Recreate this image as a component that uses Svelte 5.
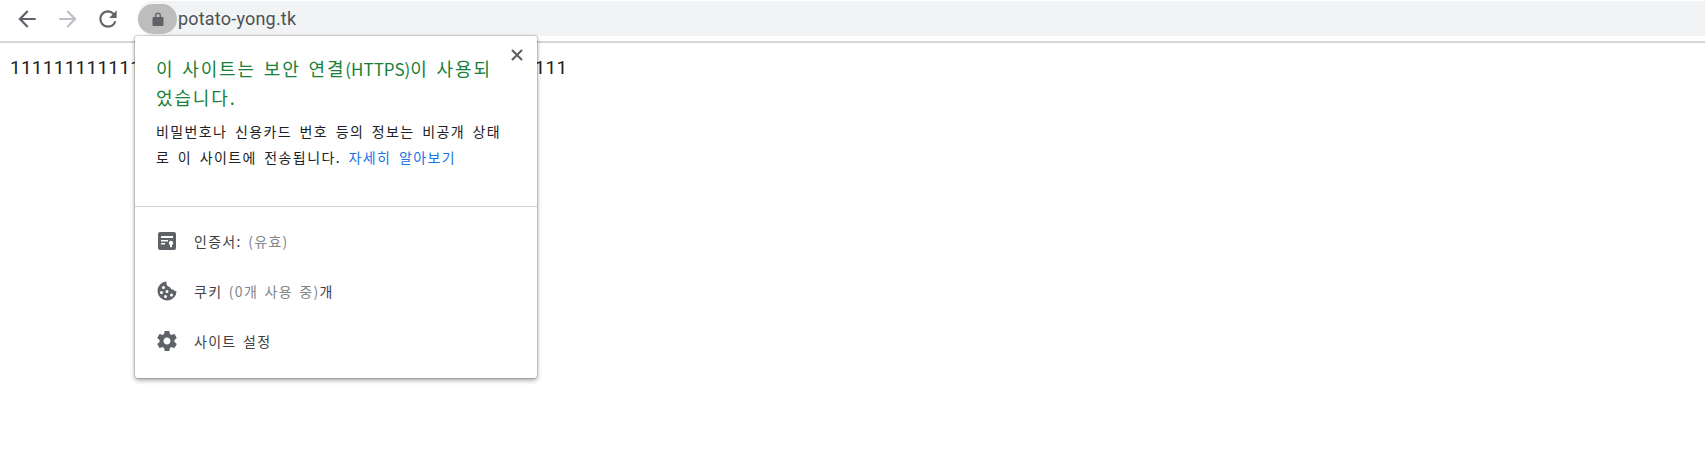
<script>
  const ones = "1".repeat(51);
</script>

<div class="toolbar">
  <div class="navs">
    <button class="nav" aria-label="back">
      <svg width="26" height="26" viewBox="0 0 24 24"><path fill="#5f6368" d="M20 11H7.830l5.590-5.590L12 4l-8 8 8 8 1.410-1.410L7.830 13H20v-2z"/></svg>
    </button>
    <button class="nav" aria-label="forward">
      <svg width="26" height="26" viewBox="0 0 24 24"><path fill="#bdc1c6" d="M12 4l-1.410 1.410L16.170 11H4v2h12.170l-5.580 5.590L12 20l8-8z"/></svg>
    </button>
    <button class="nav" aria-label="reload">
      <svg width="26" height="26" viewBox="0 0 24 24"><path fill="#5f6368" d="M17.650 6.350A7.958 7.958 0 0 0 12 4c-4.420 0-7.990 3.580-7.990 8s3.570 8 7.990 8c3.730 0 6.840-2.550 7.730-6h-2.080A5.990 5.990 0 0 1 12 18c-3.310 0-6-2.690-6-6s2.690-6 6-6c1.660 0 3.140.69 4.220 1.780L13 11h7V4l-2.350 2.350z"/></svg>
    </button>
  </div>
  <div class="omnibox">
    <span class="lock-chip">
      <svg width="12" height="14" viewBox="0 0 12 14"><path fill="#5f6368" fill-rule="evenodd" d="M3 5V3.500a3 3 0 0 1 6 0V5h1.500a1 1 0 0 1 1 1v7a1 1 0 0 1-1 1h-9a1 1 0 0 1-1-1V6a1 1 0 0 1 1-1H3zm1.300 0h3.400V3.500a1.700 1.700 0 0 0-3.400 0V5z"/></svg>
    </span>
    <span class="url">potato-yong.tk</span>
  </div>
</div>

<p class="content">{ones}</p>

<div class="popup">
  <button class="close" aria-label="close">
    <svg width="14" height="14" viewBox="0 0 14 14"><path d="M2 2l10 10M12 2L2 12" stroke="#5f6368" stroke-width="2.200" fill="none"/></svg>
  </button>
  <div class="summary">
    <h2>이 사이트는 보안 연결<span class="latin">(HTTPS)</span>이 사용되었습니다.</h2>
    <p>비밀번호나 신용카드 번호 등의 정보는 비공개 상태로 이 사이트에 전송됩니다. <span class="link">자세히 알아보기</span></p>
  </div>
  <div class="rows">
    <div class="row">
      <svg width="20" height="20" viewBox="0 0 20 20">
        <path fill="#5f6368" fill-rule="evenodd" d="M3 1h14a2 2 0 0 1 2 2v14a2 2 0 0 1-2 2H3a2 2 0 0 1-2-2V3a2 2 0 0 1 2-2zM4 5v2h12V5H4zm0 4v1.500h7V9H4zm0 3v1.500h4V12H4z"/>
        <circle cx="14" cy="12" r="2.200" fill="#fff"/><path fill="#fff" d="M13 14h2v2.500l-1-.7-1 .7z"/>
      </svg>
      <span>인증서: <em>(유효)</em></span>
    </div>
    <div class="row">
      <svg width="20" height="20" viewBox="0 0 20 20">
        <path fill="#5f6368" fill-rule="evenodd" d="M9.500 0.500a9.500 9.500 0 1 0 10 9.500c-1.300.3-2.500-.3-3-1.500-1.700.4-3.300-.8-3.500-2.500-1.900 0-3.500-1.600-3.500-3.500 0-.8 0-1.500 0-2zM6.500 5a1.500 1.500 0 1 1 0 3 1.500 1.500 0 0 1 0-3zM4.500 10a1.500 1.500 0 1 1 0 3 1.500 1.500 0 0 1 0-3zM10 9a1.500 1.500 0 1 1 0 3 1.500 1.500 0 0 1 0-3zM8.500 14a1.500 1.500 0 1 1 0 3 1.500 1.500 0 0 1 0-3zM14.500 12.500a1.500 1.500 0 1 1 0 3 1.500 1.500 0 0 1 0-3z"/>
      </svg>
      <span>쿠키 <em>(0개 사용 중)</em>개</span>
    </div>
    <div class="row">
      <svg width="20" height="20" viewBox="2 2 20 20"><path fill="#5f6368" d="M19.430 12.980c.04-.32.07-.64.07-.98s-.03-.66-.07-.98l2.110-1.650c.19-.15.24-.42.12-.64l-2-3.460c-.12-.22-.39-.3-.61-.22l-2.490 1c-.52-.4-1.080-.73-1.690-.98l-.38-2.650A.488.488 0 0 0 14 2h-4c-.25 0-.46.18-.49.42l-.38 2.650c-.61.25-1.170.59-1.690.98l-2.490-1c-.23-.09-.49 0-.61.22l-2 3.460c-.13.22-.07.49.12.64l2.110 1.650c-.04.32-.07.65-.07.98s.03.66.07.98l-2.110 1.650c-.19.15-.24.42-.12.64l2 3.460c.12.22.39.3.61.22l2.490-1c.52.4 1.080.73 1.690.98l.38 2.650c.03.24.24.42.49.42h4c.25 0 .46-.18.49-.42l.38-2.650c.61-.25 1.170-.59 1.690-.98l2.490 1c.23.09.49 0 .61-.22l2-3.460c.12-.22.07-.49-.12-.64l-2.110-1.650zM12 15.500c-1.930 0-3.500-1.570-3.500-3.500s1.570-3.500 3.500-3.500 3.500 1.570 3.500 3.500-1.570 3.500-3.500 3.500z"/></svg>
      <span>사이트 설정</span>
    </div>
  </div>
</div>

<style>
  :global(body) {
    background: #fff;
    font-family: "Roboto", "Noto Sans CJK KR", sans-serif;
  }

  .toolbar {
    display: flex;
    height: 41px;
    padding-top: 1px;
    box-sizing: border-box;
    box-shadow: 0 2px 0 #d6d6da;
  }

  .navs {
    display: flex;
    width: 137px;
    padding-left: 14px;
    box-sizing: border-box;
    gap: 14.500px;
    padding-top: 5px;
  }

  .nav {
    border: 0;
    background: none;
    padding: 0;
    width: 26px;
    height: 26px;
  }

  .omnibox {
    flex: 1;
    height: 35px;
    background: #f1f3f4;
    display: flex;
    align-items: center;
    border-radius: 18px 0 0 18px;
  }

  .lock-chip {
    width: 39px;
    height: 30px;
    border-radius: 15px;
    background: #bdbdbd;
    display: flex;
    align-items: center;
    justify-content: center;
    margin-left: 1px;
  }

  .url {
    font-size: 18px;
    letter-spacing: 0.200px;
    color: #4d5156;
    margin-left: 1px;
  }

  .content {
    margin: 15px 0 0 10px;
    font-size: 19px;
    line-height: 24px;
    letter-spacing: 0.250px;
    color: #222;
  }

  .popup {
    position: absolute;
    left: 135px;
    top: 36px;
    width: 402px;
    height: 342px;
    box-sizing: border-box;
    background: #fff;
    border-radius: 3px;
    box-shadow: 0 0 0 1px rgba(0, 0, 0, 0.12), 0 2px 5px rgba(0, 0, 0, 0.4);
    font-family: "Noto Sans CJK KR", sans-serif;
  }

  .close {
    position: absolute;
    right: 13px;
    top: 12px;
    border: 0;
    background: none;
    padding: 0;
    height: 14px;
  }

  .summary {
    padding: 18px 34px 0 21px;
    height: 152px;
    border-bottom: 1px solid #d0d0d4;
  }

  h2 {
    margin: 0 0 6px;
    padding-right: 4px;
    font-weight: 400;
    font-size: 18px;
    line-height: 29px;
    letter-spacing: 1.850px;
    word-spacing: 2px;
    color: #188038;
  }

  .latin {
    font-size: 17px;
    letter-spacing: 0;
  }

  .summary p {
    margin: 0;
    font-size: 14px;
    line-height: 26px;
    letter-spacing: 1.400px;
    word-spacing: 3px;
    color: #202124;
  }

  .link {
    color: #1a73e8;
  }

  .rows {
    padding-top: 9px;
  }

  .row {
    display: flex;
    align-items: center;
    height: 50px;
    padding-left: 22px;
    gap: 17px;
    font-size: 14px;
    letter-spacing: 1.300px;
    word-spacing: 2px;
    color: #3c4043;
  }

  .row svg {
    flex: none;
  }

  em {
    font-style: normal;
    color: #80868b;
  }
</style>
